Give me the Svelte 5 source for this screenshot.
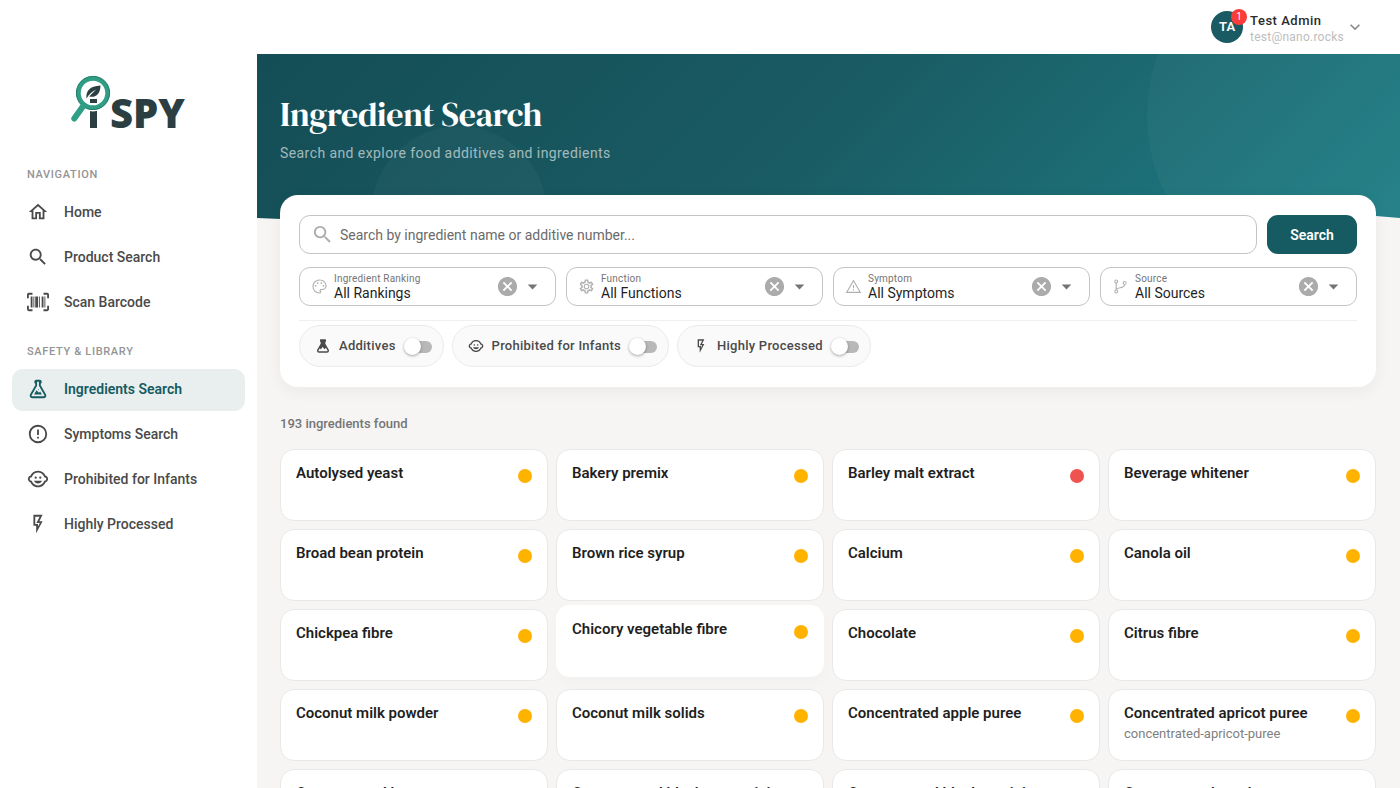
<script>
  const icons = {
    home: 'M12 5.69l5 4.5V18h-2v-6H9v6H7v-7.81l5-4.5M12 3L2 12h3v8h6v-6h2v6h6v-8h3L12 3z',
    search: 'M15.5 14h-.79l-.28-.27C15.41 12.59 16 11.11 16 9.5 16 5.91 13.09 3 9.5 3S3 5.91 3 9.5 5.91 16 9.5 16c1.61 0 3.09-.59 4.23-1.57l.27.28v.79l5 4.99L20.49 19l-4.99-5zm-6 0C7.01 14 5 11.99 5 9.5S7.01 5 9.5 5 14 7.01 14 9.5 11.99 14 9.5 14z',
    barcode: 'M4,6H6V18H4V6M7,6H8V18H7V6M9,6H12V18H9V6M13,6H14V18H13V6M16,6H18V18H16V6M19,6H20V18H19V6M2,4V8H0V4A2,2 0 0,1 2,2H6V4H2M22,2A2,2 0 0,1 24,4V8H22V4H18V2H22M2,16V20H6V22H2A2,2 0 0,1 0,20V16H2M22,20V16H24V20A2,2 0 0,1 22,22H18V20H22Z',
    flask: 'M5,19A1,1 0 0,0 6,20H18A1,1 0 0,0 19,19C19,18.79 18.93,18.59 18.82,18.43L13,8.35V4H11V8.35L5.18,18.43C5.07,18.59 5,18.79 5,19M6,22A3,3 0 0,1 3,19C3,18.4 3.18,17.84 3.5,17.37L9,7.81V6A1,1 0 0,1 8,5V4A2,2 0 0,1 10,2H14A2,2 0 0,1 16,4V5A1,1 0 0,1 15,6V7.81L20.5,17.37C20.82,17.84 21,18.4 21,19A3,3 0 0,1 18,22H6M13,16L14.34,14.66L16.27,18H7.73L10.39,13.39L13,16M12.5,12A0.5,0.5 0 0,1 13,12.5A0.5,0.5 0 0,1 12.5,13A0.5,0.5 0 0,1 12,12.5A0.5,0.5 0 0,1 12.5,12Z',
    flaskDark: 'M6,22A3,3 0 0,1 3,19C3,18.4 3.18,17.84 3.5,17.37L8.5,8.8V6A1,1 0 0,1 7.5,5V3A1,1 0 0,1 8.5,2H15.5A1,1 0 0,1 16.5,3V5A1,1 0 0,1 15.5,6V8.8L20.5,17.37C20.82,17.84 21,18.4 21,19A3,3 0 0,1 18,22H6M6,19.8H18C18.8,19.8 19,19 18.6,18.3L16.4,14.8L14.4,17L11.4,13.6L8.6,17.2L7.4,15.2L5.4,18.3C5,19 5.2,19.8 6,19.8Z',
    alert: 'M11,15H13V17H11V15M11,7H13V13H11V7M12,2C6.47,2 2,6.5 2,12A10,10 0 0,0 12,22A10,10 0 0,0 22,12A10,10 0 0,0 12,2M12,20A8,8 0 0,1 4,12A8,8 0 0,1 12,4A8,8 0 0,1 20,12A8,8 0 0,1 12,20Z',
    infant: 'M13.25 10.5a1.25 1.25 0 1 0 2.5 0a1.25 1.25 0 1 0-2.5 0M8.25 10.5a1.25 1.25 0 1 0 2.5 0a1.25 1.25 0 1 0-2.5 0M22.94 12.66c.04-.21.06-.43.06-.66s-.02-.45-.06-.66c-.25-1.51-1.36-2.74-2.81-3.17-.53-1.12-1.28-2.1-2.19-2.91C16.36 3.85 14.28 3 12 3s-4.36.85-5.94 2.26c-.92.81-1.67 1.8-2.19 2.91-1.45.43-2.56 1.65-2.81 3.17-.04.21-.06.43-.06.66s.02.45.06.66c.25 1.51 1.36 2.74 2.81 3.17.52 1.11 1.27 2.09 2.17 2.89C7.62 20.14 9.71 21 12 21s4.38-.86 5.97-2.28c.9-.8 1.65-1.79 2.17-2.89 1.44-.43 2.55-1.65 2.8-3.17zM19 14c-.1 0-.19-.02-.29-.03-.2.67-.49 1.29-.86 1.86C16.6 17.74 14.45 19 12 19s-4.6-1.26-5.85-3.17c-.37-.57-.66-1.19-.86-1.86-.1.01-.19.03-.29.03-1.1 0-2-.9-2-2s.9-2 2-2c.1 0 .19.02.29.03.2-.67.49-1.29.86-1.86C7.4 6.26 9.55 5 12 5s4.6 1.26 5.85 3.17c.37.57.66 1.19.86 1.86.1-.01.19-.03.29-.03 1.1 0 2 .9 2 2s-.9 2-2 2zM7.5 14c.76 1.77 2.49 3 4.5 3s3.74-1.23 4.5-3h-9z',
    flash: 'M7,2H17L13.5,9H17L10,22V14H7V2M9,4V12H12V14.66L14,11H10.24L13.76,4H9Z',
    palette: 'M12,22A10,10 0 0,1 2,12A10,10 0 0,1 12,2C17.5,2 22,6 22,11A6,6 0 0,1 16,17H14.2C13.9,17 13.7,17.2 13.7,17.5C13.7,17.6 13.8,17.7 13.8,17.8C14.2,18.3 14.4,18.9 14.4,19.5C14.5,20.9 13.4,22 12,22M12,3.6A8.4,8.4 0 0,0 3.6,12A8.4,8.4 0 0,0 12,20.4C12.5,20.4 12.8,20 12.8,19.5C12.8,19.3 12.6,19.1 12.5,18.9C12.2,18.5 12,18.1 12,17.5C12,16.3 13,15.4 14.2,15.4H16A4.4,4.4 0 0,0 20.4,11C20.4,6.9 16.6,3.6 12,3.6M6.5,9.8A1.2,1.2 0 0,1 6.5,12.2A1.2,1.2 0 0,1 6.5,9.8M9.5,6A1.2,1.2 0 0,1 9.5,8.4A1.2,1.2 0 0,1 9.5,6M14.5,6A1.2,1.2 0 0,1 14.5,8.4A1.2,1.2 0 0,1 14.5,6M17.5,9.8A1.2,1.2 0 0,1 17.5,12.2A1.2,1.2 0 0,1 17.5,9.8Z',
    cog: 'M12,8A4,4 0 0,1 16,12A4,4 0 0,1 12,16A4,4 0 0,1 8,12A4,4 0 0,1 12,8M12,9.6A2.4,2.4 0 0,0 9.6,12A2.4,2.4 0 0,0 12,14.4A2.4,2.4 0 0,0 14.4,12A2.4,2.4 0 0,0 12,9.6M10,22C9.75,22 9.54,21.82 9.5,21.58L9.13,18.93C8.5,18.68 7.96,18.34 7.44,17.94L4.95,18.95C4.73,19.03 4.46,18.95 4.34,18.73L2.34,15.27C2.21,15.05 2.27,14.78 2.46,14.63L4.57,12.97L4.5,12L4.57,11L2.46,9.37C2.27,9.22 2.21,8.95 2.34,8.73L4.34,5.27C4.46,5.05 4.73,4.96 4.95,5.05L7.44,6.05C7.96,5.66 8.5,5.32 9.13,5.07L9.5,2.42C9.54,2.18 9.75,2 10,2H14C14.25,2 14.46,2.18 14.5,2.42L14.87,5.07C15.5,5.32 16.04,5.66 16.56,6.05L19.05,5.05C19.27,4.96 19.54,5.05 19.66,5.27L21.66,8.73C21.79,8.95 21.73,9.22 21.54,9.37L19.43,11L19.5,12L19.43,13L21.54,14.63C21.73,14.78 21.79,15.05 21.66,15.27L19.66,18.73C19.54,18.95 19.27,19.04 19.05,18.95L16.56,17.95C16.04,18.34 15.5,18.68 14.87,18.93L14.5,21.58C14.46,21.82 14.25,22 14,22H10M11.25,4L10.88,6.61C9.68,6.86 8.62,7.5 7.85,8.39L5.44,7.35L4.69,8.65L6.8,10.2C6.4,11.37 6.4,12.64 6.8,13.8L4.68,15.36L5.43,16.66L7.86,15.62C8.63,16.5 9.68,17.14 10.87,17.38L11.24,20H12.76L13.13,17.39C14.32,17.14 15.37,16.5 16.14,15.62L18.57,16.66L19.32,15.36L17.2,13.81C17.6,12.64 17.6,11.37 17.2,10.2L19.31,8.65L18.56,7.35L16.15,8.39C15.38,7.5 14.32,6.86 13.12,6.62L12.75,4H11.25Z',
    warning: 'M12,2L1,21H23M12,5.2L20.2,19.4H3.8M11.2,10V14.5H12.8V10M11.2,16V17.8H12.8V16',
    branch: 'M6 2.2A2.8 2.8 0 0 1 6.8 7.7V14.6C8 13.6 9.7 13.3 11.5 13C14.3 12.5 16.4 12 17 9.7A2.8 2.8 0 1 1 18.7 9.7C18 13.4 14.9 14.1 11.8 14.6C9.2 15 7.3 15.4 6.9 16.4A2.8 2.8 0 1 1 5.2 16.4V7.7A2.8 2.8 0 0 1 6 2.2M6 3.7A1.3 1.3 0 0 0 6 6.3A1.3 1.3 0 0 0 6 3.7M6 17.8A1.3 1.3 0 0 0 6 20.4A1.3 1.3 0 0 0 6 17.8M18 5.7A1.3 1.3 0 0 0 18 8.3A1.3 1.3 0 0 0 18 5.7Z',
    cancel: 'M12,2C17.53,2 22,6.47 22,12C22,17.53 17.53,22 12,22C6.47,22 2,17.53 2,12C2,6.47 6.47,2 12,2M15.59,7L12,10.59L8.41,7L7,8.41L10.59,12L7,15.59L8.41,17L12,13.41L15.59,17L17,15.59L13.41,12L17,8.41L15.59,7Z',
    caret: 'M7 10l5 5 5-5z',
    chevron: 'M7.41,8.58L12,13.17L16.59,8.58L18,10L12,16L6,10L7.41,8.58Z'
  };

  const sections = [
    {
      title: 'Navigation',
      items: [
        { label: 'Home', icon: 'home' },
        { label: 'Product Search', icon: 'search' },
        { label: 'Scan Barcode', icon: 'barcode' }
      ]
    },
    {
      title: 'Safety & Library',
      items: [
        { label: 'Ingredients Search', icon: 'flask', active: true },
        { label: 'Symptoms Search', icon: 'alert' },
        { label: 'Prohibited for Infants', icon: 'infant' },
        { label: 'Highly Processed', icon: 'flash' }
      ]
    }
  ];

  const filters = [
    { id: 'ranking', label: 'Ingredient Ranking', value: 'All Rankings', icon: 'palette' },
    { id: 'function', label: 'Function', value: 'All Functions', icon: 'cog' },
    { id: 'symptom', label: 'Symptom', value: 'All Symptoms', icon: 'warning' },
    { id: 'source', label: 'Source', value: 'All Sources', icon: 'branch' }
  ];

  const toggles = [
    { label: 'Additives', icon: 'flaskDark' },
    { label: 'Prohibited for Infants', icon: 'infant' },
    { label: 'Highly Processed', icon: 'flash' }
  ];

  const ingredients = [
    { name: 'Autolysed yeast' },
    { name: 'Bakery premix' },
    { name: 'Barley malt extract', level: 'avoid' },
    { name: 'Beverage whitener' },
    { name: 'Broad bean protein' },
    { name: 'Brown rice syrup' },
    { name: 'Calcium' },
    { name: 'Canola oil' },
    { name: 'Chickpea fibre' },
    { name: 'Chicory vegetable fibre', raised: true },
    { name: 'Chocolate' },
    { name: 'Citrus fibre' },
    { name: 'Coconut milk powder' },
    { name: 'Coconut milk solids' },
    { name: 'Concentrated apple puree' },
    { name: 'Concentrated apricot puree', note: 'concentrated-apricot-puree' },
    { name: 'Concentrated banana puree' },
    { name: 'Concentrated blackcurrant juice' },
    { name: 'Concentrated blueberry juice' },
    { name: 'Concentrated cranberry puree' }
  ];
</script>

{#snippet glyph(name, size)}
  <svg class="glyph" viewBox="0 0 24 24" width={size} height={size} aria-hidden="true">
    <path d={icons[name]} fill="currentColor" fill-rule="evenodd" />
  </svg>
{/snippet}

<div class="app">
  <header class="topbar">
    <button class="account" type="button">
      <span class="avatar">TA<span class="badge">1</span></span>
      <span class="who">
        <span class="who-name">Test Admin</span>
        <span class="who-mail">test@nano.rocks</span>
      </span>
      {@render glyph('chevron', 20)}
    </button>
  </header>

  <div class="shell">
    <aside class="sidebar">
      <a class="logo" href="#home" aria-label="iSPY">
        <svg viewBox="0 0 120 60" width="120" height="60">
          <rect x="22" y="27" width="7" height="4" fill="#2b3f42" />
          <rect x="22" y="37" width="7" height="19" fill="#2b3f42" />
          <path d="M16 36L6 47.500" stroke="#fff" stroke-width="8" />
          <circle cx="25" cy="21" r="17" fill="none" stroke="#fff" stroke-width="3" />
          <circle cx="25" cy="21" r="14.600" fill="none" stroke="#2f9e84" stroke-width="4.600" />
          <circle cx="25" cy="21" r="16.600" fill="none" stroke="#26806f" stroke-width="1" />
          <path d="M14.500 35L6.300 46.500" stroke="#2f9e84" stroke-width="6" stroke-linecap="round" />
          <path d="M18.500 26.500C17.800 19 21.500 14 32.500 13.500C32.300 21.500 28.500 26 21.200 24.600C23.500 21.800 25.500 19.800 28.300 17.700C24.500 19 21 22 18.500 26.500Z" fill="#2b3f42" />
          <text x="42" y="56" class="wordmark">SPY</text>
        </svg>
      </a>

      <nav>
        {#each sections as section}
          <h2>{section.title}</h2>
          <ul>
            {#each section.items as item}
              <li>
                <a href="#{item.icon}" class:active={item.active} aria-current={item.active ? 'page' : undefined}>
                  {@render glyph(item.icon, 22)}
                  {item.label}
                </a>
              </li>
            {/each}
          </ul>
        {/each}
      </nav>
    </aside>

    <main>
      <div class="hero">
        <h1>Ingredient Search</h1>
        <p>Search and explore food additives and ingredients</p>
      </div>

      <form class="panel">
        <div class="search-row">
          <label class="search-box">
            {@render glyph('search', 23)}
            <input type="search" placeholder="Search by ingredient name or additive number..." aria-label="Search ingredients" />
          </label>
          <button class="submit" type="button">Search</button>
        </div>

        <div class="filters">
          {#each filters as filter}
            <div class="filter">
              {@render glyph(filter.icon, 17)}
              <div class="field">
                <label for={filter.id}>{filter.label}</label>
                <select id={filter.id}><option>{filter.value}</option></select>
              </div>
              <button class="clear" type="button" aria-label="Clear {filter.label}">{@render glyph('cancel', 23)}</button>
              {@render glyph('caret', 23)}
            </div>
          {/each}
        </div>

        <div class="toggles">
          {#each toggles as toggle}
            <label class="toggle">
              {@render glyph(toggle.icon, 16)}
              <span>{toggle.label}</span>
              <input type="checkbox" role="switch" />
            </label>
          {/each}
        </div>
      </form>

      <section class="results">
        <p class="count">193 ingredients found</p>
        <div class="grid">
          {#each ingredients as item}
            <article class="card" class:raised={item.raised}>
              <div>
                <h3>{item.name}</h3>
                {#if item.note}<p>{item.note}</p>{/if}
              </div>
              <span class="dot" class:avoid={item.level === 'avoid'}></span>
            </article>
          {/each}
        </div>
      </section>
    </main>
  </div>
</div>

<style>
  :global(body) {
    margin: 0;
    background: #f6f5f4;
    font-family: Roboto, 'Liberation Sans', sans-serif;
  }

  .app {
    height: 100vh;
    display: flex;
    flex-direction: column;
    overflow: hidden;
    color: #1f1f1f;
  }
  .app *, .app *::before, .app *::after { box-sizing: border-box; }
  .glyph { display: block; flex: none; }
  h1, h2, h3, p, ul { margin: 0; padding: 0; }
  button, input, select { font: inherit; color: inherit; }

  .topbar {
    flex: none;
    height: 54px;
    padding: 0 35px;
    display: flex;
    justify-content: flex-end;
    align-items: center;
    background: #fff;
    box-shadow: 0 1px 2px rgba(0, 0, 0, 0.06);
  }
  .account {
    display: flex;
    align-items: center;
    border: 0;
    padding: 0;
    background: none;
    color: #8a8a8a;
    text-align: left;
  }
  .avatar {
    position: relative;
    width: 32px;
    height: 32px;
    margin-right: 7px;
    border-radius: 50%;
    background: #1a5a62;
    color: #fff;
    font-size: 13px;
    font-weight: 600;
    line-height: 32px;
    text-align: center;
  }
  .badge {
    position: absolute;
    top: -2px;
    right: -4px;
    width: 16px;
    height: 16px;
    border-radius: 50%;
    background: #fb3d3a;
    font-size: 10px;
    font-weight: 400;
    line-height: 16px;
  }
  .who { display: flex; flex-direction: column; margin-right: 1px; padding-top: 2px; }
  .who-name { font-size: 13px; line-height: 17px; font-weight: 500; letter-spacing: 0.04em; color: #2b2b2b; }
  .who-mail { font-size: 12px; line-height: 16px; letter-spacing: 0.02em; color: #bdbdbd; }

  .shell { flex: 1; min-height: 0; display: grid; grid-template-columns: 257px minmax(0, 1fr); }

  .sidebar { background: #fff; padding: 18px 12px; }
  .logo { display: block; margin-left: 56px; height: 60px; }
  .logo svg { display: block; overflow: visible; }
  .wordmark { font: 800 40px 'Open Sans', 'Noto Sans', sans-serif; fill: #2b3f42; }
  nav h2 {
    padding: 0 15px;
    margin-top: 35px;
    font-size: 11px;
    line-height: 16px;
    font-weight: 500;
    letter-spacing: 0.06em;
    text-transform: uppercase;
    color: #949494;
  }
  nav ul { list-style: none; margin-top: 9px; display: grid; gap: 3px; }
  nav ul + h2 { margin-top: 20px; }
  nav a {
    display: flex;
    align-items: center;
    gap: 15px;
    height: 42px;
    padding: 0 15px 2px;
    border-radius: 11px;
    font-size: 14px;
    font-weight: 500;
    color: #4a4a4a;
    text-decoration: none;
  }
  nav a.active { background: #e8efee; color: #165b62; font-weight: 600; }

  main { min-width: 0; overflow: hidden; }
  .hero {
    position: relative;
    height: 165px;
    padding: 40px 23px 0;
    overflow: hidden;
    color: #fff;
    background: linear-gradient(135deg, #144d55 0%, #1a5c64 50%, #1f7e86 100%);
    clip-path: polygon(0 0, 100% 0, 100% 164px, calc(100% - 24px) 162px, 50% 150px, 24px 165px, 0 164px);
  }
  .hero::before, .hero::after {
    content: '';
    position: absolute;
    border-radius: 50%;
    background: rgba(255, 255, 255, 0.03);
  }
  .hero::before { width: 357px; height: 357px; top: -117px; right: -104px; }
  .hero::after { width: 176px; height: 176px; top: 72px; left: 10%; }
  h1 {
    font: 400 34px/40px 'DM Serif Display', 'Liberation Serif', serif;
    letter-spacing: -0.01em;
  }
  .hero p {
    margin-top: 9px;
    font-size: 14px;
    line-height: 20px;
    letter-spacing: 0.03em;
    color: rgba(255, 255, 255, 0.6);
  }

  .panel {
    position: relative;
    margin: -25px 24px 0 23px;
    padding: 20px 19px;
    top: 1px;
    border-radius: 18px;
    background: #fff;
    box-shadow: 0 4px 16px rgba(0, 0, 0, 0.05);
  }
  .search-row { display: flex; gap: 10px; }
  .search-box {
    flex: 1;
    display: flex;
    align-items: center;
    gap: 6px;
    height: 39px;
    padding: 0 11px;
    border: 1px solid #c4c4c4;
    border-radius: 11px;
    color: #adadad;
  }
  .search-box input {
    flex: 1;
    min-width: 0;
    border: 0;
    padding: 0;
    outline: 0;
    background: none;
    font-size: 14px;
    color: #1f1f1f;
  }
  .search-box input::placeholder { color: #6b6b6b; opacity: 1; }
  .submit {
    width: 90px;
    height: 39px;
    border: 0;
    border-radius: 11px;
    background: #165b62;
    color: #fff;
    font-size: 14px;
    font-weight: 600;
  }

  .filters {
    display: grid;
    grid-template-columns: repeat(4, minmax(0, 1fr));
    gap: 10px;
    margin-top: 13px;
    padding-bottom: 14px;
    border-bottom: 1px solid #f0f0f0;
  }
  .filter {
    display: flex;
    align-items: center;
    height: 39px;
    padding: 0 11px;
    border: 1px solid #c4c4c4;
    border-radius: 11px;
    color: #757575;
  }
  .filter > .glyph:first-child { color: #b0b0b0; }
  .field { flex: 1; min-width: 0; margin-left: 6px; display: flex; flex-direction: column; }
  .field label { font-size: 10px; line-height: 13px; letter-spacing: 0.02em; }
  .field select {
    appearance: none;
    border: 0;
    padding: 0;
    background: none;
    font-size: 14px;
    line-height: 17px;
    color: #1f1f1f;
  }
  .clear { border: 0; padding: 0; margin-right: 2px; background: none; color: #ababab; }

  .toggles { display: flex; gap: 8px; margin-top: 4px; }
  .toggle {
    display: flex;
    align-items: center;
    gap: 8px;
    height: 42px;
    padding: 0 11px 0 15px;
    border: 1px solid #ebebeb;
    border-radius: 22px;
    background: #fafafa;
    font-size: 13px;
    line-height: 18px;
    font-weight: 500;
    letter-spacing: 0.02em;
    color: #4a4a4a;
  }
  .toggle input {
    appearance: none;
    position: relative;
    width: 28px;
    height: 17px;
    margin: 0;
  }
  .toggle input::before, .toggle input::after { content: ''; position: absolute; }
  .toggle input::before { inset: 3px 0 2px 2px; border-radius: 6px; background: #b8b8b8; }
  .toggle input::after {
    top: 0;
    left: 0;
    width: 17px;
    height: 17px;
    border-radius: 50%;
    background: #fff;
    box-shadow: 0 1px 3px rgba(0, 0, 0, 0.35);
  }

  .results { padding: 29px 24px 0 23px; }
  .count { font-size: 13px; line-height: 18px; font-weight: 500; color: #757575; }
  .grid {
    display: grid;
    grid-template-columns: repeat(4, minmax(0, 1fr));
    gap: 8px;
    margin-top: 16px;
  }
  .card {
    display: flex;
    justify-content: space-between;
    align-items: flex-start;
    height: 72px;
    padding: 13px 15px;
    border: 1px solid #e8e8e8;
    border-radius: 14px;
    background: #fff;
  }
  .card.raised {
    border-color: transparent;
    transform: translateY(-4px);
    box-shadow: 0 6px 16px rgba(0, 0, 0, 0.02);
  }
  .card h3 { font-size: 15px; line-height: 20px; font-weight: 600; }
  .card p { font-size: 13px; line-height: 22px; color: #808080; }
  .dot { flex: none; width: 14px; height: 14px; margin-top: 6px; border-radius: 50%; background: #ffb300; }
  .dot.avoid { background: #ef5350; }
</style>
